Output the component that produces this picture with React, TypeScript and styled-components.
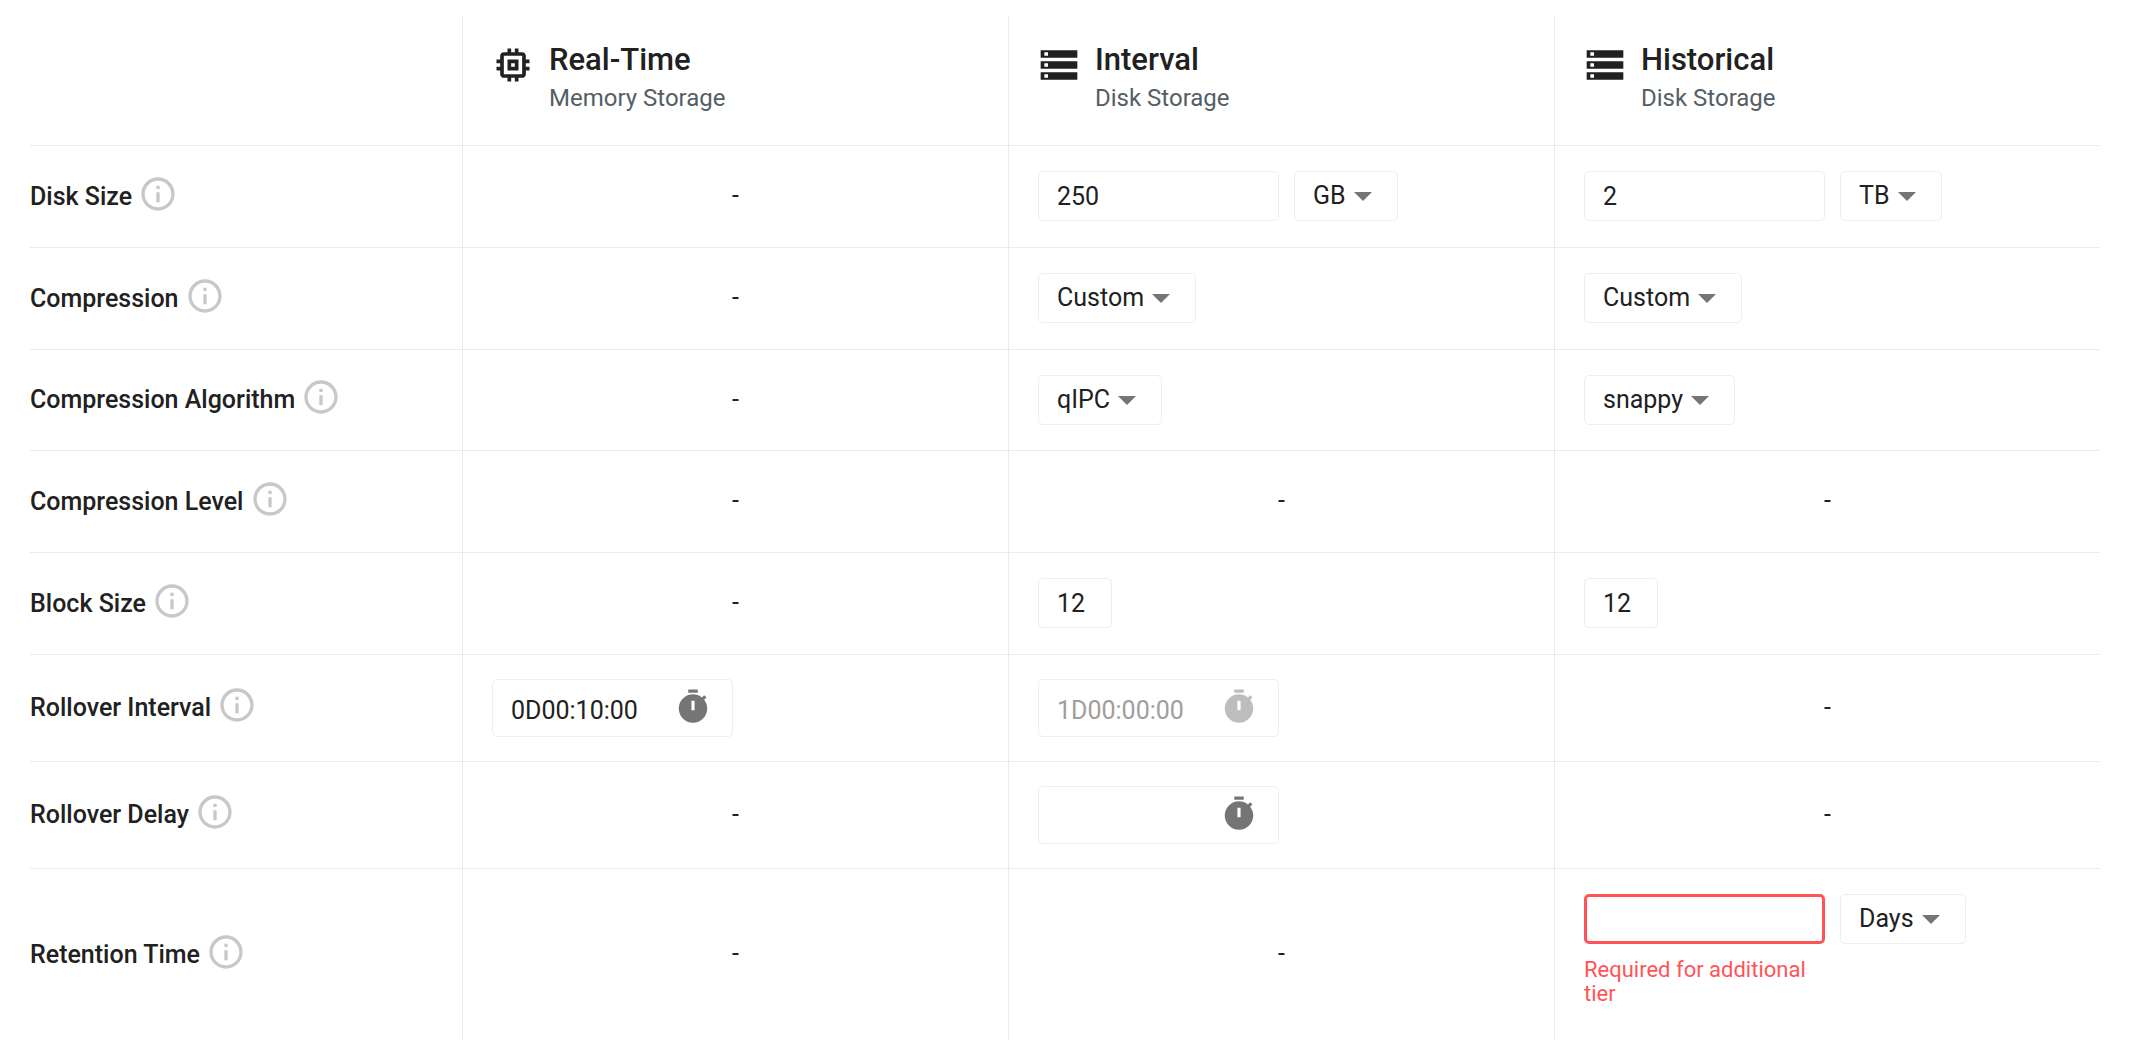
import React from 'react';
import styled, { createGlobalStyle, css } from 'styled-components';

const color = {
  text: '#212121',
  muted: '#555e65',
  disabled: '#9e9e9e',
  icon: '#757575',
  iconDisabled: '#bdbdbd',
  info: '#c8c8c8',
  line: '#ebebeb',
  control: '#eeeeee',
  error: '#ff5358',
};

const GlobalStyle = createGlobalStyle`
  *, *::before, *::after { box-sizing: border-box; }
  body {
    margin: 0;
    background: #fff;
    color: ${color.text};
    font-family: Roboto, "Liberation Sans", sans-serif;
    font-size: 25px;
    line-height: 32px;
  }
  button, input, select { font: inherit; color: inherit; }
`;

const Page = styled.main`
  padding: 16px 36px 0 30px;
`;

const Table = styled.table`
  width: 100%;
  table-layout: fixed;
  border-collapse: separate;
  border-spacing: 0;
`;

const LabelCol = styled.col`
  width: 432px;
`;

const Row = styled.tr<{ $height?: number }>`
  height: ${(p) => (p.$height ? `${p.$height}px` : 'auto')};
`;

const cellLines = css`
  border-bottom: 1px solid ${color.line};
  tbody > tr:last-child > & { border-bottom: 0; }
`;

const CornerCell = styled.td`
  padding: 0;
  ${cellLines}
`;

const TierCell = styled.th`
  padding: 25px 28px 28px;
  border-left: 1px solid ${color.line};
  text-align: left;
  font-weight: 400;
  ${cellLines}
`;

const RowHeader = styled.th`
  padding: 0;
  text-align: left;
  font-weight: 500;
  ${cellLines}
`;

const Cell = styled.td`
  padding: 0 29px 1px;
  border-left: 1px solid ${color.line};
  vertical-align: middle;
  ${cellLines}
`;

const Tier = styled.div`
  display: flex;
  align-items: flex-start;
  gap: 14px;
`;

const TierIcon = styled.svg`
  width: 44px;
  height: 44px;
  margin-top: 2px;
  flex: none;
  fill: ${color.text};
`;

const TierName = styled.div`
  font-size: 31px;
  font-weight: 500;
  line-height: 38px;
`;

const TierKind = styled.div`
  color: ${color.muted};
  font-size: 24px;
  line-height: 38px;
`;

const RowLabel = styled.div`
  display: flex;
  align-items: center;
  gap: 6px;
`;

const InfoButton = styled.button`
  display: flex;
  margin: 0 0 6px;
  padding: 0;
  border: 0;
  background: none;
  cursor: pointer;

  svg { width: 40px; height: 40px; fill: ${color.info}; }
`;

const Dash = styled.div`
  text-align: center;
`;

const Controls = styled.div`
  display: flex;
  align-items: flex-start;
  gap: 15px;
`;

const box = css`
  border: 1px solid ${color.control};
  border-radius: 5px;
  background: #fff;
`;

const TextInput = styled.input<{ $short?: boolean; $error?: boolean }>`
  ${box}
  display: block;
  width: ${(p) => (p.$short ? 74 : 241)}px;
  height: 50px;
  padding: 0 18px;
  outline: none;
  ${(p) => p.$error && css`border: 3px solid ${color.error};`}
`;

const SelectBox = styled.div`
  position: relative;

  svg {
    position: absolute;
    top: 21px;
    right: 26px;
    width: 18px;
    height: 9px;
    fill: ${color.icon};
    pointer-events: none;
  }
`;

const Select = styled.select`
  ${box}
  display: block;
  height: 50px;
  padding: 0 51px 0 18px;
  appearance: none;
  field-sizing: content;
  outline: none;
`;

const DurationBox = styled.div`
  ${box}
  display: flex;
  width: 241px;
  padding: 8px 20px 10px 18px;
`;

const DurationInput = styled.input`
  flex: 1;
  min-width: 0;
  height: 38px;
  padding: 8px 0 0;
  border: 0;
  outline: none;
  background: none;

  &:disabled { color: ${color.disabled}; }
`;

const TimerButton = styled.button`
  display: flex;
  padding: 0;
  border: 0;
  background: none;
  color: ${color.icon};

  &:disabled { color: ${color.iconDisabled}; }
  svg { width: 38px; height: 38px; fill: currentColor; }
`;

const Field = styled.div`
  width: 241px;
  margin-bottom: 9px;
`;

const HelperText = styled.p`
  margin: 14px 0 0;
  color: ${color.error};
  font-size: 22px;
  line-height: 24px;
`;

const MemoryIcon = () => (
  <TierIcon viewBox="0 0 24 24" aria-hidden="true">
    <path d="M15 9H9v6h6V9zm-2 4h-2v-2h2v2zm8-2V9h-2V7c0-1.1-.9-2-2-2h-2V3h-2v2h-2V3H9v2H7c-1.1 0-2 .9-2 2v2H3v2h2v2H3v2h2v2c0 1.1.9 2 2 2h2v2h2v-2h2v2h2v-2h2c1.1 0 2-.9 2-2v-2h2v-2h-2v-2h2zm-4 6H7V7h10v10z" />
  </TierIcon>
);

const StorageIcon = () => (
  <TierIcon viewBox="0 0 24 24" aria-hidden="true">
    <path d="M2 20h20v-4H2v4zm2-3h2v2H4v-2zM2 4v4h20V4H2zm4 3H4V5h2v2zm-4 7h20v-4H2v4zm2-3h2v2H4v-2z" />
  </TierIcon>
);

const TierHeader = ({ name, kind, icon }: { name: string; kind: string; icon: React.ReactNode }) => (
  <TierCell scope="col">
    <Tier>
      {icon}
      <div>
        <TierName>{name}</TierName>
        <TierKind>{kind}</TierKind>
      </div>
    </Tier>
  </TierCell>
);

const Dropdown = ({ label, value, options }: { label: string; value: string; options: string[] }) => (
  <SelectBox>
    <Select aria-label={label} defaultValue={value}>
      {options.map((o) => (
        <option key={o}>{o}</option>
      ))}
    </Select>
    <svg viewBox="0 0 18 9" aria-hidden="true">
      <path d="M0 0h18L9 9z" />
    </svg>
  </SelectBox>
);

const Duration = ({ label, value = '', disabled }: { label: string; value?: string; disabled?: boolean }) => (
  <DurationBox>
    <DurationInput aria-label={label} defaultValue={value} disabled={disabled} />
    <TimerButton type="button" aria-label={`Set ${label}`} disabled={disabled}>
      <svg viewBox="0 0 24 24" aria-hidden="true">
        <path d="M15 1H9v2h6V1zm4.03 6.39l1.42-1.42c-.43-.51-.9-.99-1.41-1.41l-1.42 1.42C16.07 4.74 14.12 4 12 4c-4.97 0-9 4.03-9 9s4.02 9 9 9 9-4.03 9-9c0-2.12-.74-4.07-1.97-5.61zM13 14h-2V8h2v6z" />
      </svg>
    </TimerButton>
  </DurationBox>
);

const SettingRow = ({ label, height = 102, cells }: { label: string; height?: number; cells: React.ReactNode[] }) => (
  <Row $height={height}>
    <RowHeader scope="row">
      <RowLabel>
        {label}
        <InfoButton type="button" aria-label={`About ${label}`}>
          <svg viewBox="0 0 24 24" aria-hidden="true">
            <path d="M11 7h2v2h-2zm0 4h2v6h-2zm1-9C6.48 2 2 6.48 2 12s4.48 10 10 10 10-4.48 10-10S17.52 2 12 2zm0 18c-4.41 0-8-3.59-8-8s3.59-8 8-8 8 3.59 8 8-3.59 8-8 8z" />
          </svg>
        </InfoButton>
      </RowLabel>
    </RowHeader>
    {cells.map((cell, i) => (
      <Cell key={i}>{cell ?? <Dash>-</Dash>}</Cell>
    ))}
  </Row>
);

const sizes = ['MB', 'GB', 'TB'];
const presets = ['Fast', 'Custom'];
const algorithms = ['qIPC', 'gzip', 'snappy'];

export default function App() {
  return (
    <Page>
      <GlobalStyle />
      <Table>
        <colgroup>
          <LabelCol />
          <col />
          <col />
          <col />
        </colgroup>
        <thead>
          <Row>
            <CornerCell />
            <TierHeader name="Real-Time" kind="Memory Storage" icon={<MemoryIcon />} />
            <TierHeader name="Interval" kind="Disk Storage" icon={<StorageIcon />} />
            <TierHeader name="Historical" kind="Disk Storage" icon={<StorageIcon />} />
          </Row>
        </thead>
        <tbody>
          <SettingRow
            label="Disk Size"
            cells={[
              null,
              <Controls>
                <TextInput aria-label="Interval disk size" defaultValue="250" />
                <Dropdown label="Interval disk size unit" value="GB" options={sizes} />
              </Controls>,
              <Controls>
                <TextInput aria-label="Historical disk size" defaultValue="2" />
                <Dropdown label="Historical disk size unit" value="TB" options={sizes} />
              </Controls>,
            ]}
          />
          <SettingRow
            label="Compression"
            cells={[
              null,
              <Controls><Dropdown label="Interval compression" value="Custom" options={presets} /></Controls>,
              <Controls><Dropdown label="Historical compression" value="Custom" options={presets} /></Controls>,
            ]}
          />
          <SettingRow
            label="Compression Algorithm"
            height={101}
            cells={[
              null,
              <Controls><Dropdown label="Interval compression algorithm" value="qIPC" options={algorithms} /></Controls>,
              <Controls><Dropdown label="Historical compression algorithm" value="snappy" options={algorithms} /></Controls>,
            ]}
          />
          <SettingRow label="Compression Level" cells={[null, null, null]} />
          <SettingRow
            label="Block Size"
            cells={[
              null,
              <TextInput $short aria-label="Interval block size" defaultValue="12" />,
              <TextInput $short aria-label="Historical block size" defaultValue="12" />,
            ]}
          />
          <SettingRow
            label="Rollover Interval"
            height={107}
            cells={[
              <Duration label="Real-Time rollover interval" value="0D00:10:00" />,
              <Duration label="Interval rollover interval" value="1D00:00:00" disabled />,
              null,
            ]}
          />
          <SettingRow
            label="Rollover Delay"
            height={107}
            cells={[null, <Duration label="Interval rollover delay" />, null]}
          />
          <SettingRow
            label="Retention Time"
            height={171}
            cells={[
              null,
              null,
              <Controls>
                <Field>
                  <TextInput
                    $error
                    aria-label="Historical retention time"
                    aria-invalid="true"
                    aria-describedby="retention-help"
                  />
                  <HelperText id="retention-help">Required for additional tier</HelperText>
                </Field>
                <Dropdown label="Historical retention time unit" value="Days" options={['Days', 'Weeks', 'Years']} />
              </Controls>,
            ]}
          />
        </tbody>
      </Table>
    </Page>
  );
}
